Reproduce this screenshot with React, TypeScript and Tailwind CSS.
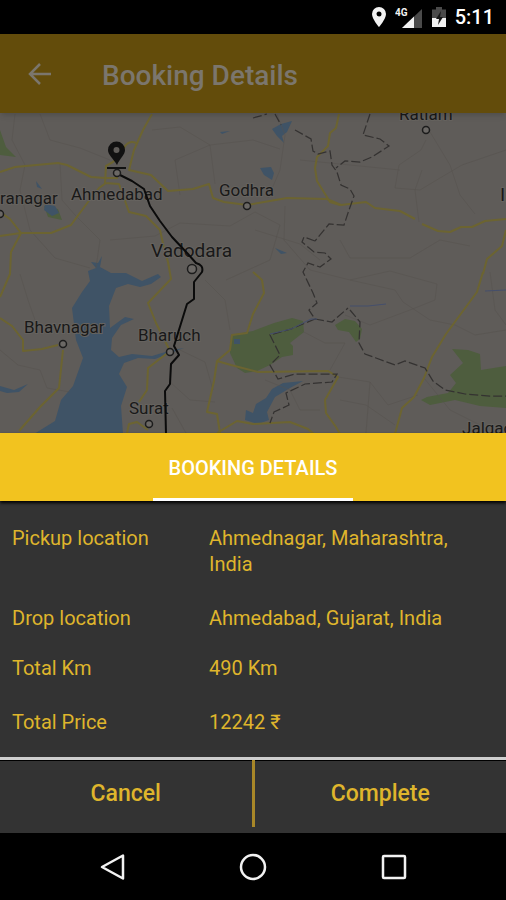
import type { ReactNode } from "react";

type Place = { name: string; x: number; y: number; size: number; dot?: [number, number] };

const places: Place[] = [
  { name: "ranagar", x: 0, y: 204, size: 17, dot: [0, 214] },
  { name: "Ahmedabad", x: 71, y: 200, size: 17, dot: [117, 173] },
  { name: "Godhra", x: 219, y: 196, size: 17, dot: [247, 206] },
  { name: "Vadodara", x: 151, y: 257, size: 19, dot: [192, 269] },
  { name: "Bhavnagar", x: 24, y: 333, size: 17, dot: [63, 344] },
  { name: "Bharuch", x: 138, y: 341, size: 17, dot: [170, 352] },
  { name: "Surat", x: 129, y: 414, size: 17, dot: [149, 424] },
  { name: "Ratlam", x: 399, y: 120, size: 17, dot: [426, 130] },
  { name: "Indore", x: 500, y: 201, size: 19 },
  { name: "Jalgaon", x: 462, y: 434, size: 17 },
];

const roads = [
  "M0 172 L15 167 L58 163 L67 165 L91 177 L105 178 L118 178",
  "M152 114 L143 130 L134 150 L129 170 L151 175 L168 191 L193 189 L209 184 L213 198 L224 202 L247 205 L287 198 L327 199 L341 205 L366 202 L375 208 L400 211 L415 219 M422 224 L438 231 L450 232 L461 227 L472 227 L485 221 L506 219",
  "M136 143 Q130 140 125 146 Q122 158 106 166 L105 183 L119 184 L129 212 L146 216 L160 230 L164 248 L168 262 L171 279 L148 303 L156 323 L170 351 L148 368 L147 390 L139 402",
  "M0 236 L21 233 L51 233 L71 225 L88 202 L99 188 L106 183",
  "M0 212 L10 219 L21 233 L11 252 L10 274 L0 297",
  "M0 318 L12 326 L23 340 L23 351 L42 349 L58 345 M63 350 L59 388 L40 407 L19 431",
  "M339 114 L336 128 L330 133 L328 146 L317 157 L315 168 L317 181 L330 202 L340 205",
  "M253 272 L262 280 L264 293 L253 314 L247 333 L232 335 L230 350 L217 361 L214 381 L207 412 L217 414 L220 433 M217 361 L231 365 L258 372 L328 371 L338 377 L325 400 L326 413 L336 427 L340 434",
  "M483 272 L477 292 L460 315 L446 334 L432 357 L424 378 L414 397 L402 408 L395 434",
  "M506 230 L502 246 L487 259 L483 274",
  "M217 433 L237 421 L253 424 L290 422 L308 429 L315 435",
  "M127 433 L129 424 L137 422 L148 430",
];

const minorRoads = [
  "M15 114 L12 140 L25 165 L20 190 L30 230 L55 258 L90 268",
  "M40 114 L50 140 L80 148 L110 160 M60 163 L62 200 L75 215 L100 240 L96 268",
  "M152 130 L180 127 L210 145 L253 140 L280 149 M180 195 L175 160 L210 145 L215 184",
  "M110 240 L155 236 L180 223 L230 226 L255 212 L280 225 L270 260 L226 280",
  "M285 206 L284 240 L310 270 L350 280 L390 271 L437 284 L435 300 L410 310 L370 325 L345 315",
  "M426 140 L421 150 L399 165 L395 188 L420 190 L440 178 L462 165 L506 150 M422 170 L415 190 L419 222",
  "M430 132 L450 165 L460 195 L475 214 M340 240 L350 258 L410 258 L440 240 L470 246",
  "M350 280 L395 290 L403 302 L430 320 L455 325 L475 335 L506 330",
  "M0 350 L18 365 L40 370 L47 388 L70 392 M20 274 L28 300 L35 320",
  "M205 280 L225 300 L230 330 M180 350 L205 362 L213 390 M170 382 L190 400 L215 402 M172 408 L186 433",
  "M265 380 L290 390 L300 410 L320 410 M338 377 L370 382 L388 405 L418 395 M370 382 L366 433 M340 400 L366 405 L395 425",
  "M424 378 L450 410 L480 425 M490 272 L495 310 L506 325 M300 330 L325 343 L345 343 L330 370",
  "M277 114 L285 135 L280 170 L268 198 M300 160 L350 165 L400 170 M255 230 L300 244 L320 260",
];

const borders = [
  "M253 118 L267 114 M275 114 L281 125 M295 130 L311 139 L313 151 L318 154 L330 151 L332 165 L337 172 L341 185 L350 189 L354 196 L349 210 L344 225 L329 224 L315 241 M370 114 L363 135 L380 139 L389 146 L372 157 L360 162 L345 161 L336 168",
  "M315 241 L304 237 L302 242 L314 252 L325 253 L331 259 L320 267 L308 263 L303 272 L313 293 L317 303 L309 310 L315 319 L291 329 L270 335 L280 355 L270 365 L278 379 L295 374 L337 374 L332 382 L305 384 L286 393 L289 405 L274 412 L270 423",
  "M315 319 L332 322 L348 308 M350 310 L360 322 L359 343 L365 354 L376 358 L395 365 L405 361 L425 368 L433 381 L445 390 L465 394 L490 396 L506 396",
];

function RouteMap() {
  return (
    <svg
      role="img"
      aria-label="Route from Vadodara to Ahmedabad"
      viewBox="0 113 506 320"
      preserveAspectRatio="xMidYMid slice"
      className="min-h-80 w-full flex-1 bg-[#5f5c59]"
    >
      <g fill="#4e5d3e">
        <path d="M0 130 L6 147 L16 157 L0 155Z M44 206 L58 209 L62 220 L48 217Z" />
        <path d="M231 335 L253 331 L274 323 L292 318 L303 321 L304 332 L290 343 L293 346 L293 355 L282 357 L270 365 L257 371 L245 373 L237 368 L230 353Z" />
        <path d="M335 325 L345 319 L355 321 L362 329 L360 339 L356 342 L349 332 L338 330Z" />
        <path d="M452 349 L468 350 L480 354 L481 370 L506 366 L506 408 L480 406 L455 400 L430 405 L421 400 L427 397 L448 393 L456 383 L450 375 L463 363Z" />
      </g>
      <g fill="#3f5366">
        <path d="M88 271 L96 268 L91 262 L98 263 L102 256 L100 267 L111 273 L126 273 L142 281 L158 274 L161 277 L151 284 L140 287 L128 284 L116 288 L109 306 L110 328 L125 317 L134 319 L121 325 L112 338 L111 350 L119 357 L132 354 L152 356 L172 350 L184 348 L155 359 L138 358 L124 363 L119 374 L127 387 L121 406 L123 434 L34 434 L55 421 L61 400 L73 386 L83 358 L76 340 L72 308 L82 292 L90 281Z" />
        <path d="M0 386 L14 390 L28 384 L19 392 L7 393 L0 391Z M36 181 L42 189 L37 187Z M45 204 L55 206 L59 213 L52 216 L44 210Z" />
        <path d="M272 129 L281 124 L292 121 L287 132 L282 136 L284 143 L277 136Z M260 168 L271 167 L274 173 L272 180 L264 175Z M275 248 L287 253 L281 254Z M220 132 L230 131 L222 134Z" />
        <path d="M303 381 L283 383 L272 389 L266 398 L256 404 L253 413 L246 410 L245 420 L258 424 L269 420 L267 412 L275 397 L290 388Z M234 339 L240 339 L240 344 L234 344Z" />
      </g>
      <g fill="none" stroke="#56514d" strokeOpacity=".5" strokeWidth="1">
        {minorRoads.map((d) => (
          <path key={d} d={d} />
        ))}
      </g>
      <g fill="none" stroke="#6c6431" strokeWidth="2" strokeLinejoin="round">
        {roads.map((d) => (
          <path key={d} d={d} />
        ))}
      </g>
      <g fill="none" stroke="#343231" strokeWidth="1.25" strokeDasharray="9 3">
        {borders.map((d) => (
          <path key={d} d={d} />
        ))}
      </g>
      <path d="M270 334 L291 329 L311 319 L317 319 M350 306 L368 306 L386 304 M485 291 L506 290" fill="none" stroke="#454f6c" />
      <g fontFamily="Roboto, sans-serif" fill="#191919" stroke="#66635f" strokeWidth="2" paintOrder="stroke">
        {places.map((p) => (
          <text key={p.name} x={p.x} y={p.y} fontSize={p.size}>
            {p.name}
          </text>
        ))}
      </g>
      <path
        d="M118 174 L132 181 L144 189 L150 206 L160 221 L172 237 L188 254 L196 263 Q204 265 202 272 L194 282 L194 299 L187 304 L174 346 L179 355 L171 364 L170 384 L165 391 L166 434"
        fill="none"
        stroke="#0b0b0b"
        strokeWidth="2"
        strokeLinejoin="round"
      />
      <g fill="#6b6865" stroke="#1c1c1c" strokeWidth="1.5">
        {places.map((p) => p.dot && <circle key={p.name} cx={p.dot[0]} cy={p.dot[1]} r={p.name === "Vadodara" ? 4.5 : 3.5} />)}
      </g>
      <path fillRule="evenodd" fill="#111" d="M117 165 C113 158 108 155 108 150 A8.5 8.5 0 0 1 125 150 C125 155 120 158 117 165Z M116.500 147 A3 3 0 1 0 116.500 153 A3 3 0 1 0 116.500 147Z" />
      <path d="M107 168 H126" stroke="#111" strokeWidth="2" />
    </svg>
  );
}

function StatusBar() {
  return (
    <div className="flex h-[34px] items-center justify-end bg-black pr-3 text-white">
      <svg viewBox="0 0 16 20" className="mr-2 h-5 w-4" fill="#f2f2f2" aria-hidden="true">
        <path fillRule="evenodd" d="M8 0a7 7 0 0 0-7 7c0 5 7 13 7 13s7-8 7-13a7 7 0 0 0-7-7Zm0 4.500a2.500 2.500 0 1 1 0 5 2.500 2.500 0 0 1 0-5Z" />
      </svg>
      <svg viewBox="0 0 28 22" className="mr-2 h-[22px] w-7" role="img" aria-label="4G signal">
        <path d="M27 3V22H7Z" fill="#4a4a4a" />
        <path d="M19 10.500V22H7Z" fill="#f2f2f2" />
        <text x="0" y="10" fontSize="10" fontWeight="700" fontFamily="Roboto, sans-serif" fill="#f2f2f2">
          4G
        </text>
      </svg>
      <svg viewBox="0 0 16 20" className="mr-2 h-5 w-4" aria-hidden="true">
        <path d="M5 0h6v2.500h4V11H1V2.500h4Z" fill="#4a4a4a" />
        <path d="M1 11h14v9H1Z" fill="#f2f2f2" />
        <path d="M10 4 5 12h3l-1 6 5-8H9Z" fill="#161616" />
      </svg>
      <span className="text-xl leading-6 font-medium">5:11</span>
    </div>
  );
}

const details = [
  { label: "Pickup location", value: "Ahmednagar, Maharashtra, India", space: "pt-6" },
  { label: "Drop location", value: "Ahmedabad, Gujarat, India", space: "pt-7" },
  { label: "Total Km", value: "490 Km", space: "pt-6" },
  { label: "Total Price", value: "12242 ₹", space: "pt-7" },
];

function NavButton({ label, children }: { label: string; children: ReactNode }) {
  return (
    <button type="button" aria-label={label} className="flex size-12 items-center justify-center">
      <svg viewBox="0 0 28 28" className="size-7" fill="none" stroke="#f2f2f2" strokeWidth="2.5" strokeLinejoin="round">
        {children}
      </svg>
    </button>
  );
}

export default function App() {
  return (
    <div className="flex min-h-screen flex-col bg-[#333] font-[Roboto,sans-serif]">
      <StatusBar />
      <header className="z-10 flex h-[79px] items-center bg-[#634c0b] pl-6 text-[#7b766d] shadow-md">
        <button type="button" aria-label="Back" className="mr-[46px] flex size-8 items-center justify-center">
          <svg viewBox="0 0 24 24" className="size-6" fill="none" stroke="currentColor" strokeWidth="2.5">
            <path d="M23 12H2M12 2 2 12l10 10" />
          </svg>
        </button>
        <h1 className="pt-1 text-[28px] leading-8 font-medium">Booking Details</h1>
      </header>
      <RouteMap />
      <section className="text-[#dfb52c]">
        <div role="tablist" className="flex h-[68px] justify-center bg-[#f2c31f] shadow-[0_2px_3px_#000]">
          <button type="button" role="tab" aria-selected="true" className="w-[200px] border-b-[3px] border-white pt-1 text-xl font-medium text-white">
            BOOKING DETAILS
          </button>
        </div>
        <dl className="pb-[22px] text-xl leading-[26px]">
          {details.map((row) => (
            <div key={row.label} className={`grid grid-cols-[197px_1fr] px-3 ${row.space}`}>
              <dt>{row.label}</dt>
              <dd className="max-w-64">{row.value}</dd>
            </div>
          ))}
        </dl>
        <div className="grid h-[76px] grid-cols-[1fr_3px_1fr] border-t-[3px] border-[#cfcfcf] text-[23px] font-medium shadow-[inset_0_1px_0_#000]">
          <button type="button" className="pb-1">Cancel</button>
          <span className="mb-[6px] bg-[#a88728]" />
          <button type="button" className="pb-1">Complete</button>
        </div>
      </section>
      <nav className="flex h-[67px] items-center justify-center gap-[92px] bg-black">
        <NavButton label="Back">
          <path d="M24 2.500V25.500L3 14Z" />
        </NavButton>
        <NavButton label="Home">
          <circle cx="14" cy="14" r="12" />
        </NavButton>
        <NavButton label="Recent apps">
          <rect x="4" y="3" width="22" height="22" rx="1" />
        </NavButton>
      </nav>
    </div>
  );
}
